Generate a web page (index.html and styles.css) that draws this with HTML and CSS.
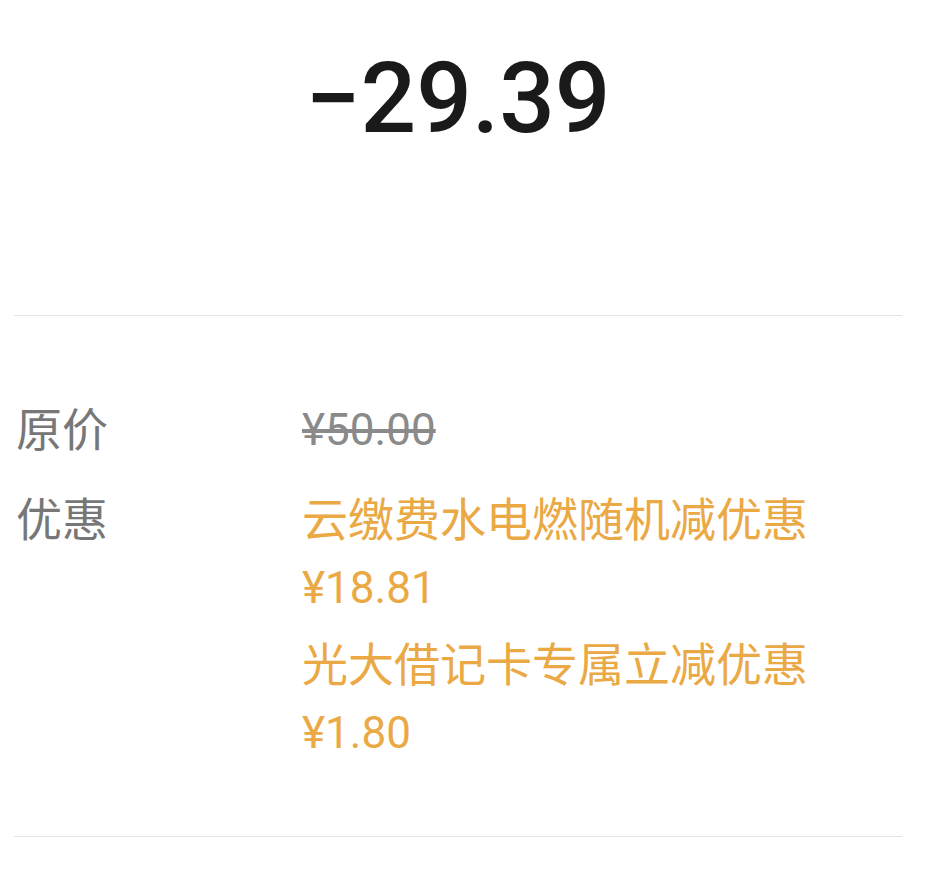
FILE: index.html
```html
<!DOCTYPE html>
<html lang="zh-CN">
<head>
    <meta charset="UTF-8">
    <meta name="viewport" content="width=device-width, initial-scale=1.0">
    <title>交易详情</title>
    <link rel="stylesheet" href="styles.css">
</head>
<body>
    <div class="container">
        <div class="amount">−29.39</div>

        <div class="details">
            <div class="row">
                <div class="label">原价</div>
                <div class="value original">¥50.00</div>
            </div>
            <div class="row">
                <div class="label">优惠</div>
                <div class="value discounts">
                    <div class="discount">
                        <div>云缴费水电燃随机减优惠</div>
                        <div class="num">¥18.81</div>
                    </div>
                    <div class="discount">
                        <div>光大借记卡专属立减优惠</div>
                        <div class="num">¥1.80</div>
                    </div>
                </div>
            </div>
        </div>
    </div>
</body>
</html>
```

FILE: styles.css
```css
body {
    font-family: Roboto, "Noto Sans CJK SC", sans-serif;
    background-color: #fff;
    margin: 0;
}
.container {
    padding: 0 38px 0 14px;
}
.amount {
    height: 316px;
    box-sizing: border-box;
    padding-top: 39px;
    text-align: center;
    font-size: 98px;
    line-height: 120px;
    font-weight: 500;
    color: #1a1a1a;
    border-bottom: 1px solid #e3e3e3;
}
.details {
    padding: 80px 0 69px;
    border-bottom: 1px solid #e3e3e3;
    display: flex;
    flex-direction: column;
    gap: 22px;
}
.row {
    display: flex;
    font-size: 46px;
    line-height: 68px;
}
.label {
    width: 286px;
    flex-shrink: 0;
    padding-left: 2px;
    color: #777;
}
.original {
    color: #8a8a8a;
    font-size: 44px;
    text-decoration: line-through;
}
.discounts {
    color: #eaa944;
    display: flex;
    flex-direction: column;
    gap: 9px;
}
.num {
    font-size: 44px;
}
```
